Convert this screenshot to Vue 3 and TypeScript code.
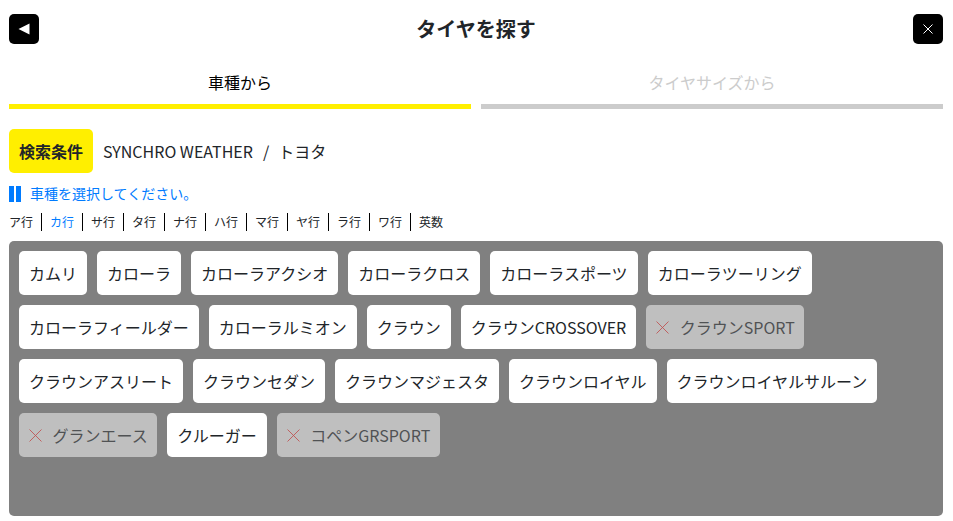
<template>
  <div class="page">
    <!-- ヘッダー -->
    <header class="head">
      <button type="button" class="icon-btn" aria-label="戻る">
        <svg width="12" height="12" viewBox="0 0 12 12"><path d="M0.5 6 L11.5 0.5 V11.5 Z" fill="#fff" /></svg>
      </button>
      <h1 class="title">タイヤを探す</h1>
      <button type="button" class="icon-btn" aria-label="閉じる">
        <svg width="10" height="10" viewBox="0 0 10 10"><path d="M0.5 0.5 L9.5 9.5 M9.5 0.5 L0.5 9.5" stroke="#fff" stroke-width="1" fill="none" /></svg>
      </button>
    </header>

    <!-- タブ -->
    <nav class="tabs">
      <div class="tab active">車種から</div>
      <div class="tab">タイヤサイズから</div>
    </nav>

    <!-- 検索条件 -->
    <div class="cond">
      <span class="cond-label">検索条件</span>
      <span class="cond-text">SYNCHRO WEATHER<span class="slash">/</span>トヨタ</span>
    </div>

    <p class="note">車種を選択してください。</p>

    <!-- 行インデックス -->
    <ul class="kana">
      <li v-for="k in kanaList" :key="k" :class="{ current: k === 'カ行' }">{{ k }}</li>
    </ul>

    <!-- 車種一覧 -->
    <div class="panel">
      <button
        v-for="car in cars"
        :key="car.name"
        type="button"
        class="car"
        :class="{ off: car.off }"
      >
        <svg v-if="car.off" class="x" width="13" height="13" viewBox="0 0 13 13">
          <path d="M0.5 0.5 L12.5 12.5 M12.5 0.5 L0.5 12.5" stroke="#ff2020" stroke-width="0.85" fill="none" />
        </svg>
        {{ car.name }}
      </button>
    </div>
  </div>
</template>

<script setup lang="ts">
interface Car {
  name: string
  off?: boolean
}

const kanaList = ["ア行", "カ行", "サ行", "タ行", "ナ行", "ハ行", "マ行", "ヤ行", "ラ行", "ワ行", "英数"]

const cars: Car[] = [
  { name: "カムリ" },
  { name: "カローラ" },
  { name: "カローラアクシオ" },
  { name: "カローラクロス" },
  { name: "カローラスポーツ" },
  { name: "カローラツーリング" },
  { name: "カローラフィールダー" },
  { name: "カローラルミオン" },
  { name: "クラウン" },
  { name: "クラウンCROSSOVER" },
  { name: "クラウンSPORT", off: true },
  { name: "クラウンアスリート" },
  { name: "クラウンセダン" },
  { name: "クラウンマジェスタ" },
  { name: "クラウンロイヤル" },
  { name: "クラウンロイヤルサルーン" },
  { name: "グランエース", off: true },
  { name: "クルーガー" },
  { name: "コペンGRSPORT", off: true },
]
</script>

<style scoped>
.page {
  box-sizing: border-box;
  height: 521px;
  padding: 14px 10px 5px 9px;
  display: flex;
  flex-direction: column;
  font-family: "Noto Sans CJK JP", "Noto Sans", sans-serif;
  color: #212529;
  background: #fff;
}

.head {
  display: flex;
  justify-content: space-between;
  align-items: center;
  height: 30px;
}

.icon-btn {
  width: 30px;
  height: 30px;
  padding: 0;
  border: 0;
  border-radius: 5px;
  background: #000;
  display: flex;
  align-items: center;
  justify-content: center;
}

.title {
  margin: 0;
  font-size: 20px;
  font-weight: 700;
  line-height: 30px;
}

.tabs {
  display: flex;
  gap: 10px;
  margin-top: 16px;
}

.tab {
  flex: 1;
  height: 44px;
  line-height: 44px;
  text-align: center;
  font-size: 16px;
  color: #ccc;
  border-bottom: 5px solid #ccc;
}

.tab.active {
  color: #000;
  border-bottom-color: #ffef00;
}

.cond {
  display: flex;
  align-items: center;
  gap: 10px;
  margin-top: 20px;
}

.cond-label {
  width: 84px;
  height: 44px;
  line-height: 44px;
  text-align: center;
  border-radius: 5px;
  background: #ffef00;
  font-size: 16px;
  font-weight: 700;
}

.cond-text {
  font-size: 16px;
}

.slash {
  margin: 0 9px 0 10px;
}

.note {
  margin: 13px 0 0;
  height: 16px;
  line-height: 14px;
  font-size: 14px;
  color: #007bff;
  border-left: 5px solid #007bff;
  position: relative;
  box-sizing: border-box;
  padding-left: 16px;
}

/* 二本線の右側 */
.note::before {
  content: "";
  position: absolute;
  left: 2px;
  top: 0;
  width: 5px;
  height: 16px;
  background: #007bff;
}

.kana {
  list-style: none;
  display: flex;
  margin: 11px 0 0;
  padding: 0;
}

.kana li {
  box-sizing: border-box;
  width: 41px;
  height: 18px;
  line-height: 18px;
  font-size: 12px;
  border-right: 1px solid #000;
}

.kana li + li {
  padding-left: 8px;
}

.kana li:first-child {
  width: 33px;
}

.kana li:last-child {
  border-right: 0;
}

.kana li.current {
  color: #007bff;
}

.panel {
  flex: 1;
  margin-top: 10px;
  padding: 10px;
  border-radius: 5px;
  background: #808080;
  display: flex;
  flex-wrap: wrap;
  align-content: flex-start;
  gap: 10px;
}

.car {
  height: 44px;
  padding: 0 10px;
  border: 0;
  border-radius: 5px;
  background: #fff;
  color: #212529;
  font: inherit;
  font-size: 16px;
  display: flex;
  align-items: center;
}

.car.off {
  opacity: 0.5;
  padding-right: 9.5px;
}

.x {
  margin-right: 10.5px;
}
</style>

<style>
html,
body {
  margin: 0;
}
</style>
